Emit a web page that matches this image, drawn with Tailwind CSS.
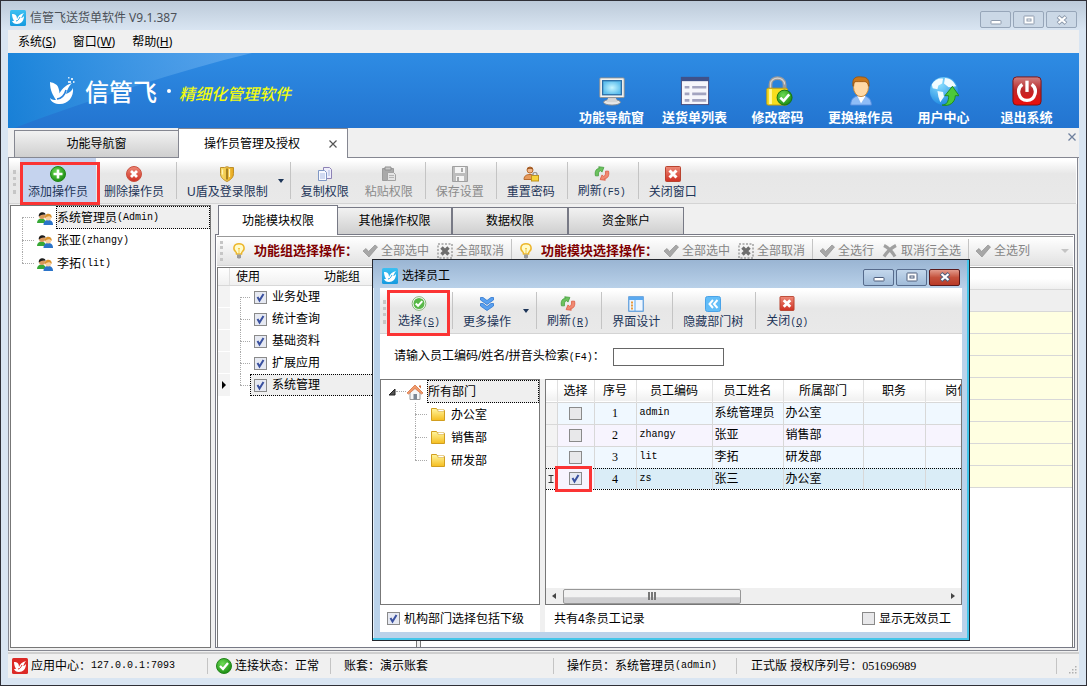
<!DOCTYPE html>
<html lang="zh-CN">
<head>
<meta charset="utf-8">
<title>信管飞送货单软件</title>
<script src="https://cdn.jsdelivr.net/npm/@tailwindcss/browser@4"></script>
</head>
<body class="font-['Liberation_Sans','Noto_Sans_CJK_SC',sans-serif] text-[12px] leading-4 text-black">
<svg class="absolute size-0" xmlns="http://www.w3.org/2000/svg">
  <defs>
    <linearGradient id="gBlue" x1="0" y1="0" x2="0" y2="1"><stop offset="0" stop-color="#3cc0f2"/><stop offset="1" stop-color="#159adf"/></linearGradient>
    <linearGradient id="gRed" x1="0" y1="0" x2="0" y2="1"><stop offset="0" stop-color="#ee8a78"/><stop offset="1" stop-color="#cf2f22"/></linearGradient>
    <linearGradient id="gPower" x1="0" y1="0" x2="0" y2="1"><stop offset="0" stop-color="#cf8080"/><stop offset=".45" stop-color="#bb2a2c"/><stop offset="1" stop-color="#ee0d0a"/></linearGradient>
    <linearGradient id="gGold" x1="0" y1="0" x2="1" y2="0"><stop offset="0" stop-color="#f9df6e"/><stop offset="1" stop-color="#e8a81c"/></linearGradient>
    <linearGradient id="gFolder" x1="0" y1="0" x2="0" y2="1"><stop offset="0" stop-color="#fff6a0"/><stop offset="1" stop-color="#f5bd1e"/></linearGradient>
    <radialGradient id="gGreen" cx=".4" cy=".35" r=".7"><stop offset="0" stop-color="#6ddc55"/><stop offset="1" stop-color="#17890f"/></radialGradient>
    <radialGradient id="gGlobe" cx=".35" cy=".25" r=".8"><stop offset="0" stop-color="#8be0ff"/><stop offset="1" stop-color="#1a86e0"/></radialGradient>
    <radialGradient id="gScreen"><stop offset="0" stop-color="#c8f6ff"/><stop offset="1" stop-color="#5fc0ee"/></radialGradient>
    <linearGradient id="gSwoosh" x1="0" y1="0" x2="1" y2="0"><stop offset="0" stop-color="#1583d8" stop-opacity=".75"/><stop offset="1" stop-color="#75b4f2" stop-opacity=".6"/></linearGradient>
  </defs>
  <symbol id="bird" viewBox="0 0 26 28"><path d="M1 5c4 1 8 2 9 8 1 3 0 5-1 6 3-6 7-11 14-13-4 4-5 8-6 11 3-1 6-3 7-6 1 9-5 16-13 16-5 0-9-2-10-6 2 2 4 2 6 2C4 18 1 14 1 5z" fill="currentColor"/><path d="M8 22c4 0 8-4 9-9" fill="none" stroke="#2b83dc" stroke-width="1.6"/><path d="M19 4h3v2h-3zM22 1h2v2h-2zM24 4h1.500v2h-1.500zM19 0h1.500v1.500h-1.500z" fill="currentColor" opacity=".8"/></symbol>
  <symbol id="app" viewBox="0 0 16 16"><rect width="16" height="16" rx="1.500" fill="url(#gBlue)"/><path d="M2 4c3 0 5 1 5 5 1-3 3-5 7-6-2 2-2 4-3 5 1 0 2-1 3-2 0 5-3 8-7 8-3 0-4-1-5-3h2C3 9 2 7 2 4z" fill="#fff"/><path d="M6 11c2 0 3-2 4-4" stroke="#27a6e6" fill="none"/></symbol>
  <symbol id="appred" viewBox="0 0 16 16"><rect width="16" height="16" rx="1.500" fill="#dc2a26"/><path d="M2 4c3 0 5 1 5 5 1-3 3-5 7-6-2 2-2 4-3 5 1 0 2-1 3-2 0 5-3 8-7 8-3 0-4-1-5-3h2C3 9 2 7 2 4z" fill="#fff"/><path d="M6 11c2 0 3-2 4-4" stroke="#dc2a26" fill="none"/></symbol>
  <symbol id="add" viewBox="0 0 16 16"><circle cx="8" cy="8" r="7.500" fill="url(#gGreen)" stroke="#23851b"/><path d="M8 3.500v9M3.500 8h9" stroke="#fff" stroke-width="2.600"/></symbol>
  <symbol id="del" viewBox="0 0 16 16"><circle cx="8" cy="8" r="7.500" fill="url(#gRed)" stroke="#c9503f"/><path d="M5 5l6 6M11 5l-6 6" stroke="#fff" stroke-width="2.800"/></symbol>
  <symbol id="ok" viewBox="0 0 16 16"><circle cx="8" cy="8" r="7.500" fill="url(#gGreen)" stroke="#23851b"/><path d="M4 8l3 3 5-6" stroke="#fff" stroke-width="2.300" fill="none"/></symbol>
  <symbol id="oklight" viewBox="0 0 16 16"><circle cx="8" cy="8" r="7.300" fill="#fff" stroke="#7fae73"/><circle cx="8" cy="8" r="5.900" fill="#58b848"/><path d="M4.500 8l2.500 2.500 4.500-5" stroke="#fff" stroke-width="2.200" fill="none"/></symbol>
  <symbol id="shield" viewBox="0 0 16 16"><path d="M1.500 1.500h4L8 .7l2.500.8h4v6c0 4-3 6.500-6.500 8-3.500-1.500-6.500-4-6.500-8z" fill="url(#gGold)" stroke="#bd8f2b"/><path d="M8 2.500v11" stroke="#8f6b14" stroke-width="1.500"/><path d="M3.500 3.500v5M10.500 3v8" stroke="#fff3b8" stroke-width="1.200"/></symbol>
  <symbol id="copy" viewBox="0 0 16 16"><path d="M6.500 1.500h6l2 2v9h-8z" fill="#efeefb" stroke="#8d82b5"/><path d="M1.500 4.500h6l2 2v8h-8z" fill="#f7f9ff" stroke="#7f97c4"/><path d="M3 8h5M3 10h5M3 12h5M11 5h2M11 7h2M11 9h2" stroke="#a9bbe3"/></symbol>
  <symbol id="paste" viewBox="0 0 16 16"><path d="M1.500 2.500h11v12h-11z" fill="#a9a9a9" stroke="#9b9b9b"/><path d="M4 1h6v3H4z" fill="#c9c9c9" stroke="#8f8f8f"/><path d="M6.500 6.500h6l2 2v6h-8z" fill="#e4e4e4" stroke="#a3a3a3"/><path d="M8 9.500h5M8 11.500h5" stroke="#b5b5b5"/></symbol>
  <symbol id="save" viewBox="0 0 16 16"><path d="M.5.5h15v15H.5z" fill="#bdbdbd" stroke="#a0a0a0"/><path d="M3 1h10v6H3zM4 10h8v5H4z" fill="#f5f5f5"/><path d="M9 2h2v4H9zM5 11h2v4H5z" fill="#aaa"/></symbol>
  <symbol id="reset" viewBox="0 0 16 16"><circle cx="7" cy="4" r="3" fill="#f3b98a" stroke="#b86a2c"/><path d="M4 3.500C4 .5 10 .5 10 3.500 8 2.500 6 2.500 4 3.500z" fill="#9a5420"/><path d="M1 13.500c0-4 3-5 6-5s4 1 4 5z" fill="#e79a5c" stroke="#b86a2c"/><rect x="8.500" y="9.500" width="7" height="5.500" fill="#f6d23b" stroke="#c0921a"/><path d="M10 9.500V8c0-2 4-2 4 0v1.500" fill="none" stroke="#8b8b8b" stroke-width="1.200"/></symbol>
  <symbol id="refresh" viewBox="0 0 16 16"><path d="M1 10.500C0 5.500 2 2.500 5 2.800L4.500.8l5.500.7L8 6.500 6.500 5C4.500 5.200 4 7.500 4.200 10.500z" fill="#6cc25e" stroke="#3f9a38" stroke-width=".8"/><path d="M15 5.500c1 5-1 8-4 7.700l.5 2-5.500-.7 2-5 1.500 1.500c2-.2 2.500-2.500 2.300-5.500z" fill="#f08a72" stroke="#dc5238" stroke-width=".8"/></symbol>
  <symbol id="closered" viewBox="0 0 16 16"><rect x=".5" y=".5" width="15" height="15" rx="1" fill="url(#gRed)" stroke="#b9432f"/><path d="M4.500 4.500l7 7M11.500 4.500l-7 7" stroke="#fff" stroke-width="3"/></symbol>
  <symbol id="more" viewBox="0 0 16 16"><path d="M1.500 1.500h2.500L8 4.500l4-3h2.500V4L8 8.500 1.500 4zM1.500 7.500H4l4 3 4-3h2.500V10L8 14.500 1.500 10z" fill="#58a0f0" stroke="#2f76cf" stroke-width=".8"/></symbol>
  <symbol id="design" viewBox="0 0 16 16"><rect x=".8" y=".8" width="14.400" height="14.400" fill="#eef6ff" stroke="#3b8ad8"/><path d="M1 1h14v3H1z" fill="#5aa9f0"/><path d="M7 4v11" stroke="#5aa9f0"/><path d="M3 6.500h2M3 9.500h2M3 12.500h2" stroke="#e89a3c" stroke-width="1.800"/></symbol>
  <symbol id="hide" viewBox="0 0 16 16"><rect x=".5" y=".5" width="15" height="15" rx="2" fill="#62bdf8" stroke="#4aa3e8"/><path d="M8 4L4.500 8 8 12M12.500 4L9 8l3.500 4" fill="none" stroke="#fff" stroke-width="2"/></symbol>
  <symbol id="bulb" viewBox="0 0 16 16"><path d="M8 .8c6 0 6 5.500 3.500 7.700-.8.700-1 1.500-1 2.500h-5c0-1-.2-1.800-1-2.500C2 6.300 2 .8 8 .8z" fill="#fffbc9" stroke="#ecb62c" stroke-width="1.500"/><path d="M6 11.500h4v3l-1 1H7l-1-1z" fill="#9b9b9b"/><path d="M7 5l1 1 1-1M8 6v5" stroke="#f3c84a" fill="none"/></symbol>
  <symbol id="tick" viewBox="0 0 16 16"><path d="M1 8l3-2.500 2.500 3L13 2l2.500 2L7 14z" fill="#a7a7a7" stroke="#909090" stroke-width=".7"/></symbol>
  <symbol id="untick" viewBox="0 0 16 16"><rect x="1" y="1" width="14" height="14" fill="none" stroke="#777" stroke-dasharray="2 1.500"/><path d="M4.500 4.500l7 7M11.500 4.500l-7 7" stroke="#6e6e6e" stroke-width="3.500"/></symbol>
  <symbol id="cross" viewBox="0 0 16 16"><path d="M2 2.500c4 2 8 6 11 11M14 2.500C9 5 5 9 2 13.500" stroke="#a0a0a0" stroke-width="3.200" fill="none"/></symbol>
  <symbol id="users" viewBox="0 0 16 16"><path d="M0 13c0-3 2-4.500 4.500-4.500S9 10 9 13z" fill="#37a836"/><circle cx="5" cy="6" r="3" fill="#d9985d"/><path d="M1.800 6.500C1 1 9 1 8.500 5 6 4 4 5 1.800 6.500z" fill="#1c1c1c"/><path d="M6.500 15c0-3.500 2-5 4.700-5 3 0 4.800 1.500 4.800 5z" fill="#2b74c9"/><circle cx="11.200" cy="7.500" r="3" fill="#f7cf9e"/><path d="M7.800 8.500C6.500 2.500 15.500 2 14.800 8c-2-2.500-4.500-2.500-7 .5z" fill="#d9922d"/></symbol>
  <symbol id="folder" viewBox="0 0 16 16"><path d="M1.500 2.500h5l1.500 2h6.500v10h-13z" fill="url(#gFolder)" stroke="#d19e1f"/><path d="M8 3.500h6v2H8z" fill="#fff" stroke="#d9b04a" stroke-width=".6"/></symbol>
  <symbol id="home" viewBox="0 0 16 16"><path d="M3 8l5-5 5 5v7.500H3z" fill="#f6f6f6" stroke="#9a9a9a"/><path d="M0 9l8-8 8 8-1.500 1L8 4.500 1.500 10z" fill="#f29a6b" stroke="#cf6a38" stroke-width=".7"/><path d="M6.500 10h3.500v5.500H6.500z" fill="#7b8794"/><path d="M12 1.500h2v3l-2-2z" fill="#cf6a38"/></symbol>
  <symbol id="check" viewBox="0 0 13 13"><path d="M3.500 6l2 3.500L9.500 3" fill="none" stroke="#39509f" stroke-width="2"/></symbol>
  <symbol id="wmin" viewBox="0 0 12 10"><rect x="1" y="5.500" width="10" height="3.500" rx=".5" fill="#fff" stroke="currentColor"/></symbol>
  <symbol id="wmax" viewBox="0 0 12 10"><rect x="1" y="1" width="10" height="8" rx=".5" fill="#fff" stroke="currentColor"/><rect x="4" y="4" width="4" height="2" fill="none" stroke="currentColor"/></symbol>
  <symbol id="wx" viewBox="0 0 12 10"><path d="M2 1.500l8 7M10 1.500l-8 7" stroke="currentColor" stroke-width="4"/><path d="M2.500 2l7 6M9.500 2l-7 6" stroke="#fff" stroke-width="2.200"/></symbol>
  <symbol id="pc" viewBox="0 0 32 32"><ellipse cx="16" cy="28" rx="9" ry="3" fill="#e8e8e8" stroke="#8d8d8d"/><path d="M12 23h8l2 5H10z" fill="#d5d5d5"/><rect x="3" y="2" width="26" height="21" rx="1" fill="#f3f3f0" stroke="#8f9090"/><rect x="6" y="5" width="20" height="15" fill="url(#gScreen)" stroke="#2a6ea6" stroke-width="1.400"/></symbol>
  <symbol id="list" viewBox="0 0 32 32"><rect x="1.500" y="1.500" width="29" height="29" fill="#f6f6fb" stroke="#4a4a78"/><path d="M1 1h30v4.500H1z" fill="#3f5189"/><path d="M5 12h5M5 19h5M5 26h5M13 12h15M13 19h15M13 26h15" stroke="#a3a4c0" stroke-width="2.800"/></symbol>
  <symbol id="lock" viewBox="0 0 32 32"><path d="M8 14V9c0-9 15-9 15 0v5" fill="none" stroke="#9b9b9b" stroke-width="4"/><path d="M8 14V9c0-9 15-9 15 0" fill="none" stroke="#d5d5d5" stroke-width="1.200"/><rect x="4" y="13" width="22" height="18" rx="1.500" fill="#f7dd1e" stroke="#c09a10"/><path d="M8 14v16" stroke="#fff8a0" stroke-width="3"/><circle cx="23" cy="23" r="8" fill="url(#gGreen)" stroke="#14700f"/><path d="M18.500 23l3.500 3.500 6-7" fill="none" stroke="#fff" stroke-width="2.800"/></symbol>
  <symbol id="user" viewBox="0 0 32 32"><path d="M5 31c0-7 4-10 11-10s11 3 11 10z" fill="#8fbdf7" stroke="#5a8fe0"/><path d="M12 21l4 8 5-8z" fill="#fff"/><ellipse cx="16" cy="12" rx="8" ry="10" fill="#ffd9a6" stroke="#c98a3c"/><path d="M7.500 11C6 1 11 .5 17 1c7 0 8 5 7.500 10-1-3-2-4-4-5 1-.0-9 0-11 0-1 1-1.500 2-2 5z" fill="#c9761a" stroke="#94500c" stroke-width=".8"/></symbol>
  <symbol id="globe" viewBox="0 0 32 32"><circle cx="16" cy="16" r="15" fill="url(#gGlobe)"/><path d="M3 9c3-5 8-7 12-6l-1 5-4 2-1 4-5-1zM17 2c6 0 10 4 12 9l-8 1-5-4zM9 16l6 1 1 5-4 6-2-6z" fill="#f0fbff"/><path d="M14 31c5 0 7-4 7-10h-4l8-10 7 10h-4c0 7-6 12-14 10z" fill="#4cc93a" stroke="#1f8a1a"/></symbol>
  <symbol id="power" viewBox="0 0 32 32"><rect x="1" y="1" width="30" height="30" rx="4" fill="url(#gPower)" stroke="#7d1010"/><path d="M11 9c-7 5-4 17 5 17s12-12 5-17" fill="none" stroke="#fff" stroke-width="3.500"/><path d="M16 5v12" stroke="#fff" stroke-width="3.500"/></symbol>
</svg>

<div class="relative flex min-h-screen flex-col border border-[#2f2f36] bg-[#d9e5f2]">
  <!-- Title bar -->
  <header class="flex h-[29px] items-center gap-1 bg-linear-to-b from-[#bccad9] to-[#d9e5f2] pr-[9px] pl-[9px]">
    <svg class="mt-1 size-4"><use href="#app"/></svg>
    <h1 class="mt-1 flex-1 font-['Noto_Sans','Noto_Sans_CJK_SC',sans-serif] text-[12px] text-[#4c5158]">信管飞送货单软件 V9.1.387</h1>
    <div class="mt-2 flex gap-0.5 text-[#8e9bad]">
      <button aria-label="最小化" class="flex h-[17px] w-[31px] items-center justify-center rounded-xs border border-[#97a6b9] bg-[#cbd8e6]"><svg class="h-2.5 w-3"><use href="#wmin"/></svg></button>
      <button aria-label="最大化" class="flex h-[17px] w-[31px] items-center justify-center rounded-xs border border-[#97a6b9] bg-[#cbd8e6]"><svg class="h-2.5 w-3"><use href="#wmax"/></svg></button>
      <button aria-label="关闭" class="flex h-[17px] w-[31px] items-center justify-center rounded-xs border border-[#97a6b9] bg-[#cbd8e6]"><svg class="h-2.5 w-3"><use href="#wx"/></svg></button>
    </div>
  </header>

  <div class="mr-[7px] ml-[7px] flex flex-1 flex-col bg-[#f0f0f0]">
    <nav class="flex h-[23px] items-center gap-[17px] pl-2.5 font-['Noto_Sans','Noto_Sans_CJK_SC',sans-serif]">
      <button>系统(<u>S</u>)</button><button>窗口(<u>W</u>)</button><button>帮助(<u>H</u>)</button>
    </nav>

    <!-- Banner -->
    <div class="relative flex h-[75px] items-center overflow-hidden bg-linear-to-b from-[#2e8ce4] to-[#2374d0] pr-[11px]">
      <svg class="absolute top-0 left-0 h-[75px] w-[260px]" viewBox="0 0 260 75"><path d="M0 0H244C170 18 90 44 6 75H0z" fill="url(#gSwoosh)"/></svg>
      <div class="relative flex flex-1 items-center pl-[41px] text-white">
        <svg class="h-7 w-[26px]"><use href="#bird"/></svg>
        <span class="ml-2.5 font-['Noto_Sans_CJK_SC',sans-serif] text-[24px] leading-7 font-medium">信管飞</span>
        <span class="ml-2.5 size-1 rounded-full bg-white"></span>
        <span class="ml-2 pt-1 font-['Noto_Sans_CJK_SC',sans-serif] text-[16px] leading-6 font-medium text-[#f0fa10] italic">精细化管理软件</span>
      </div>
      <div class="relative flex pt-[22px] text-[13px] leading-5 font-bold text-white">
        <button class="flex w-[83px] flex-col items-center gap-0.5"><svg class="size-[30px]"><use href="#pc"/></svg>功能导航窗</button>
        <button class="flex w-[83px] flex-col items-center gap-0.5"><svg class="size-[30px]"><use href="#list"/></svg>送货单列表</button>
        <button class="flex w-[83px] flex-col items-center gap-0.5"><svg class="size-[30px]"><use href="#lock"/></svg>修改密码</button>
        <button class="flex w-[83px] flex-col items-center gap-0.5"><svg class="size-[30px]"><use href="#user"/></svg>更换操作员</button>
        <button class="flex w-[83px] flex-col items-center gap-0.5"><svg class="size-[30px]"><use href="#globe"/></svg>用户中心</button>
        <button class="flex w-[83px] flex-col items-center gap-0.5"><svg class="size-[30px]"><use href="#power"/></svg>退出系统</button>
      </div>
    </div>

    <!-- Page tabs -->
    <div class="flex h-[30px] shrink-0 items-stretch">
      <div class="w-1.5 border-b border-[#858791]"></div>
      <button class="mt-0.5 w-[164px] border border-r-0 border-[#858791] bg-linear-to-b from-[#f2f2f2] to-[#cfcfcf]">功能导航窗</button>
      <div class="flex w-[170px] items-center border border-b-0 border-[#858791] bg-white pr-2.5 pl-[25px]"><button class="flex-1 text-left">操作员管理及授权</button><button aria-label="关闭标签" class="size-2"><svg class="size-2" viewBox="0 0 8 8"><path d="M.5.5l7 7M7.500.5l-7 7" stroke="#555" stroke-width="1.200"/></svg></button></div>
      <div class="flex flex-1 items-start justify-end border-b border-[#858791] pt-1 pr-0.5"><button aria-label="关闭页面" class="size-2.5 p-px"><svg class="size-2" viewBox="0 0 8 8"><path d="M.5.5l7 7M7.500.5l-7 7" stroke="#6e7f9d" stroke-width="1.300"/></svg></button></div>
    </div>

    <!-- Page -->
    <main class="mr-px flex flex-1 flex-col border border-t-0 border-[#858791] bg-white">
      <div class="mr-px flex h-[46px] border-b border-[#d4d4d4] bg-linear-to-b from-white from-5% via-[#e7e7e7] via-35% to-[#e9e9e9] text-[#1d3558]">
        <span class="mt-3 ml-1 h-6 border-l-[3px] border-dotted border-[#c6c6c6]"></span>
        <button class="relative ml-1 flex w-[76px] flex-col items-center bg-[#c5d3ee] pt-2 leading-5"><svg class="size-4"><use href="#add"/></svg>添加操作员<span class="absolute -right-1 top-1 -bottom-0.5 left-0 border-3 border-[#fb3434]"></span></button>
        <button class="flex flex-col items-center px-2 pt-2 leading-5"><svg class="size-4"><use href="#del"/></svg>删除操作员</button>
        <span class="mt-1 mr-0.5 mb-1 ml-1 w-px bg-[#c4c4c4]"></span>
        <button class="flex flex-col items-center px-2 pt-2 leading-5"><svg class="size-4"><use href="#shield"/></svg><span>U盾及登录限制</span></button>
        <button aria-label="更多登录限制" class="w-2.5"><svg class="mx-auto h-1 w-1.5" viewBox="0 0 6 4"><path d="M0 0h6L3 4z" fill="#1d3558"/></svg></button>
        <span class="mt-1 mr-0.5 mb-1 ml-1 w-px bg-[#c4c4c4]"></span>
        <button class="flex flex-col items-center px-2 pt-2 leading-5"><svg class="size-4"><use href="#copy"/></svg>复制权限</button>
        <button disabled class="flex flex-col items-center px-2 pt-2 leading-5 text-[#8b8b8b]"><svg class="size-4"><use href="#paste"/></svg>粘贴权限</button>
        <span class="mt-1 mr-0.5 mb-1 ml-1 w-px bg-[#c4c4c4]"></span>
        <button disabled class="flex flex-col items-center px-2 pt-2 leading-5 text-[#8b8b8b]"><svg class="size-4"><use href="#save"/></svg>保存设置</button>
        <span class="mt-1 mr-0.5 mb-1 ml-1 w-px bg-[#c4c4c4]"></span>
        <button class="flex flex-col items-center px-2 pt-2 leading-5"><svg class="size-4"><use href="#reset"/></svg>重置密码</button>
        <span class="mt-1 mr-0.5 mb-1 ml-1 w-px bg-[#c4c4c4]"></span>
        <button class="flex flex-col items-center px-2 pt-2 leading-5"><svg class="size-4"><use href="#refresh"/></svg><span>刷新<span class="font-['Liberation_Mono',monospace] text-[10px]">(F5)</span></span></button>
        <span class="mt-1 mr-0.5 mb-1 ml-1 w-px bg-[#c4c4c4]"></span>
        <button class="flex flex-col items-center px-2 pt-2 leading-5"><svg class="size-4"><use href="#closered"/></svg>关闭窗口</button>
      </div>

      <div class="flex flex-1 bg-[#f0f0f0] pr-0.5 pt-px pl-px">
        <!-- Operators -->
        <aside class="mb-0.5 w-[201px] border border-[#777] bg-white">
          <ul class="pl-[11px]">
            <li class="flex h-[23px]"><span class="flex w-3 flex-col"><i class="flex-1"></i><i class="flex-1 border-t border-l border-dotted border-[#aaa]"></i></span><svg class="mt-1 ml-[3px] size-4"><use href="#users"/></svg><a href="#" class="ml-[3px] flex flex-1 items-center border border-dotted border-black bg-[#efefef]">系统管理员<span class="font-['Liberation_Mono',monospace] text-[10px]">(Admin)</span></a></li>
            <li class="flex h-[23px]"><span class="flex w-3 flex-col"><i class="flex-1 border-l border-dotted border-[#aaa]"></i><i class="flex-1 border-t border-l border-dotted border-[#aaa]"></i></span><svg class="mt-1 ml-[3px] size-4"><use href="#users"/></svg><a href="#" class="ml-1 flex items-center">张亚<span class="font-['Liberation_Mono',monospace] text-[10px]">(zhangy)</span></a></li>
            <li class="flex h-[23px]"><span class="flex w-3 flex-col"><i class="flex-1 border-l border-dotted border-[#aaa]"></i><i class="flex-1 border-t border-dotted border-[#aaa]"></i></span><svg class="mt-1 ml-[3px] size-4"><use href="#users"/></svg><a href="#" class="ml-1 flex items-center">李拓<span class="font-['Liberation_Mono',monospace] text-[10px]">(lit)</span></a></li>
          </ul>
        </aside>

        <!-- Permissions -->
        <section class="mb-0.5 ml-1 flex min-w-0 flex-1 flex-col">
          <div class="flex h-[30px]">
            <div class="w-[3px] border-b border-[#777985]"></div>
            <button class="w-[120px] border border-b-0 border-[#777985] bg-white">功能模块权限</button>
            <button class="mt-0.5 w-[114px] border border-l-0 border-[#777985] bg-linear-to-b from-[#f2f2f2] to-[#cfcfcf]">其他操作权限</button>
            <button class="mt-0.5 w-[116px] border border-[#777985] bg-linear-to-b from-[#f2f2f2] to-[#cfcfcf]">数据权限</button>
            <button class="mt-0.5 w-[116px] border border-[#777985] bg-linear-to-b from-[#f2f2f2] to-[#cfcfcf]">资金账户</button>
            <div class="flex-1 border-b border-[#777985]"></div>
          </div>
          <div class="flex flex-1 flex-col border border-t-0 border-[#777985] bg-white px-px pt-px">
            <div class="flex h-[30px] items-center overflow-hidden border-t border-b border-[#999] border-b-[#d4d4d4] bg-linear-to-b from-white to-[#e2e2e2] whitespace-nowrap text-[#858585]">
              <span class="ml-[3px] h-5 border-l-[3px] border-dotted border-[#c6c6c6]"></span>
              <svg class="ml-2 size-4"><use href="#bulb"/></svg><b class="ml-[7px] w-[108px] text-[13px] text-[#800000]">功能组选择操作：</b>
              <button disabled class="flex items-center gap-[3px]"><svg class="size-4"><use href="#tick"/></svg>全部选中</button>
              <button disabled class="ml-2 flex items-center gap-[3px]"><svg class="size-4"><use href="#untick"/></svg>全部取消</button>
              <span class="ml-[7px] h-6 w-px bg-[#c4c4c4]"></span>
              <svg class="ml-1.5 size-4"><use href="#bulb"/></svg><b class="ml-[7px] w-[122px] text-[13px] text-[#800000]">功能模块选择操作：</b>
              <button disabled class="flex items-center gap-[3px]"><svg class="size-4"><use href="#tick"/></svg>全部选中</button>
              <button disabled class="ml-2 flex items-center gap-[3px]"><svg class="size-4"><use href="#untick"/></svg>全部取消</button>
              <span class="ml-[7px] h-6 w-px bg-[#c4c4c4]"></span>
              <button disabled class="ml-1.5 flex items-center gap-[3px]"><svg class="size-4"><use href="#tick"/></svg>全选行</button>
              <button disabled class="ml-2 flex items-center gap-[3px]"><svg class="size-4"><use href="#cross"/></svg>取消行全选</button>
              <span class="ml-[7px] h-6 w-px bg-[#c4c4c4]"></span>
              <button disabled class="ml-1.5 flex items-center gap-[3px]"><svg class="size-4"><use href="#tick"/></svg>全选列</button>
              <svg class="mr-1 ml-auto h-1 w-2" viewBox="0 0 8 4"><path d="M0 0h8L4 4z" fill="#c4c4c4"/></svg>
            </div>
            <div class="mt-px flex flex-1">
              <div class="w-[200px] border border-b-0 border-[#777]">
                <div class="flex h-[18px] items-center border-b border-[#d8d8d8] bg-linear-to-b from-white to-[#f0f0f0]"><span class="h-full w-3 border-r border-[#e0e0e0]"></span><span class="w-9 text-center">使用</span><span class="ml-[58px]">功能组</span></div>
                <ul>
                  <li class="flex h-[22px]"><span class="w-3 border-b border-white bg-[#f3f3f3]"></span><span class="ml-2.5 flex w-2.5 flex-col"><i class="flex-1"></i><i class="flex-1 border-t border-l border-dotted border-[#aaa]"></i></span><label class="ml-1 flex items-center gap-[5px]"><span class="grid size-[13px]"><input type="checkbox" checked class="col-start-1 row-start-1 size-[13px] appearance-none border border-[#8a8a8a] bg-[#e6e9f2]"><svg class="col-start-1 row-start-1 size-[13px]"><use href="#check"/></svg></span>业务处理</label></li>
                  <li class="flex h-[22px]"><span class="w-3 border-b border-white bg-[#f3f3f3]"></span><span class="ml-2.5 flex w-2.5 flex-col"><i class="flex-1 border-l border-dotted border-[#aaa]"></i><i class="flex-1 border-t border-l border-dotted border-[#aaa]"></i></span><label class="ml-1 flex items-center gap-[5px]"><span class="grid size-[13px]"><input type="checkbox" checked class="col-start-1 row-start-1 size-[13px] appearance-none border border-[#8a8a8a] bg-[#e6e9f2]"><svg class="col-start-1 row-start-1 size-[13px]"><use href="#check"/></svg></span>统计查询</label></li>
                  <li class="flex h-[22px]"><span class="w-3 border-b border-white bg-[#f3f3f3]"></span><span class="ml-2.5 flex w-2.5 flex-col"><i class="flex-1 border-l border-dotted border-[#aaa]"></i><i class="flex-1 border-t border-l border-dotted border-[#aaa]"></i></span><label class="ml-1 flex items-center gap-[5px]"><span class="grid size-[13px]"><input type="checkbox" checked class="col-start-1 row-start-1 size-[13px] appearance-none border border-[#8a8a8a] bg-[#e6e9f2]"><svg class="col-start-1 row-start-1 size-[13px]"><use href="#check"/></svg></span>基础资料</label></li>
                  <li class="flex h-[22px]"><span class="w-3 border-b border-white bg-[#f3f3f3]"></span><span class="ml-2.5 flex w-2.5 flex-col"><i class="flex-1 border-l border-dotted border-[#aaa]"></i><i class="flex-1 border-t border-l border-dotted border-[#aaa]"></i></span><label class="ml-1 flex items-center gap-[5px]"><span class="grid size-[13px]"><input type="checkbox" checked class="col-start-1 row-start-1 size-[13px] appearance-none border border-[#8a8a8a] bg-[#e6e9f2]"><svg class="col-start-1 row-start-1 size-[13px]"><use href="#check"/></svg></span>扩展应用</label></li>
                  <li class="flex h-[22px]"><span class="flex w-3 items-center bg-[#f3f3f3] pl-1"><svg class="h-2 w-1" viewBox="0 0 4 8"><path d="M0 0l4 4-4 4z"/></svg></span><span class="ml-2.5 flex w-2.5 flex-col"><i class="flex-1 border-l border-dotted border-[#aaa]"></i><i class="flex-1 border-t border-dotted border-[#aaa]"></i></span><label class="flex flex-1 items-center gap-[5px] border border-dotted border-black bg-[#efefef] pl-[3px]"><span class="grid size-[13px]"><input type="checkbox" checked class="col-start-1 row-start-1 size-[13px] appearance-none border border-[#8a8a8a] bg-[#e6e9f2]"><svg class="col-start-1 row-start-1 size-[13px]"><use href="#check"/></svg></span>系统管理</label></li>
                </ul>
              </div>
              <div class="w-[3px] bg-[#f0f0f0]"></div>
              <div class="flex-1 border border-b-0 border-[#777]">
                <div class="h-[22px] border-b border-[#d8d8d8] bg-linear-to-b from-white from-50% to-[#f0f0f0]"></div>
                <div class="h-[22px] border-b border-[#d8d8d8] bg-[#efefef]"></div>
                <div class="h-[22px] border-b border-[#d8d8d8] bg-[#ffffe1]"></div>
                <div class="h-[22px] border-b border-[#d8d8d8] bg-[#ffffe1]"></div>
                <div class="h-[22px] border-b border-[#d8d8d8] bg-[#ffffe1]"></div>
                <div class="h-[22px] border-b border-[#d8d8d8] bg-[#ffffe1]"></div>
                <div class="h-[22px] border-b border-[#d8d8d8] bg-[#ffffe1]"></div>
                <div class="h-[22px] border-b border-[#d8d8d8] bg-[#ffffe1]"></div>
                <div class="h-[22px] border-b border-[#d8d8d8] bg-[#ffffe1]"></div>
                <div class="h-[22px] border-b border-[#d8d8d8] bg-[#ffffe1]"></div>
              </div>
            </div>
          </div>
        </section>
      </div>
    </main>

    <!-- Status bar -->
    <footer class="mt-px flex h-[26px] items-center border-t-2 border-[#cfcfcf] bg-[#f0f0f0] pl-1 whitespace-nowrap">
      <div class="flex w-[195px] items-center gap-[3px]"><svg class="size-4"><use href="#appred"/></svg><span class="flex items-center">应用中心：<span class="font-['Liberation_Mono',monospace] text-[10px]">127.0.0.1:7093</span></span></div>
      <div class="flex w-[123px] items-center gap-[3px] border-l border-[#c4c4c4] pl-2"><svg class="size-4"><use href="#ok"/></svg>连接状态：正常</div>
      <div class="w-[223px] border-l border-[#c4c4c4] pl-[13px]">账套：演示账套</div>
      <div class="flex w-[183px] items-center border-l border-[#c4c4c4] pl-[13px]">操作员：系统管理员<span class="font-['Liberation_Mono',monospace] text-[10px]">(admin)</span></div>
      <div class="flex-1 border-l border-[#c4c4c4] pl-[14px]">正式版 授权序列号：<span class="font-['Liberation_Serif',serif]">051696989</span></div>
      <div class="flex h-4 w-[23px] items-end justify-end border-l border-[#c4c4c4] pr-0.5"><svg class="size-2" viewBox="0 0 8 8"><path d="M6 0h1.500v1.500H6zM6 3h1.500v1.500H6zM6 6h1.500v1.500H6zM3 3h1.500v1.500H3zM3 6h1.500v1.500H3zM0 6h1.500v1.500H0z" fill="#b0b0b0"/></svg></div>
    </footer>
  </div>
  <div class="h-[7px]"></div>

  <!-- Employee picker -->
  <div role="dialog" aria-labelledby="dlgTitle" class="absolute top-[258px] left-[371px] flex h-[382px] w-[598px] flex-col border border-[#24272e] bg-[#bad2ea] shadow-[inset_-2px_-2px_0_#43c6ea,inset_1px_1px_0_#e8f2fb]">
    <div class="mr-0.5 flex h-7 items-center gap-1 bg-linear-to-b from-[#9ab5d3] to-[#b9d1e9] pr-[7px] pl-[9px]">
      <svg class="mt-1 size-4"><use href="#app"/></svg>
      <h2 id="dlgTitle" class="mt-1 flex-1">选择员工</h2>
      <div class="mt-1.5 flex gap-0.5 text-[#4f5f7d]">
        <button aria-label="最小化" class="flex h-[17px] w-[31px] items-center justify-center rounded-xs border border-[#566b8c] bg-linear-to-b from-[#c3d7ec] to-[#a0bbd8]"><svg class="h-2.5 w-3"><use href="#wmin"/></svg></button>
        <button aria-label="最大化" class="flex h-[17px] w-[31px] items-center justify-center rounded-xs border border-[#566b8c] bg-linear-to-b from-[#c3d7ec] to-[#a0bbd8]"><svg class="h-2.5 w-3"><use href="#wmax"/></svg></button>
        <button aria-label="关闭" class="flex h-[17px] w-[31px] items-center justify-center rounded-xs border border-[#5a1a1c] bg-linear-to-b from-[#e29a8c] via-[#c4513c] to-[#b93a28]"><svg class="h-2.5 w-3"><use href="#wx"/></svg></button>
      </div>
    </div>
    <div class="mx-[7px] mb-2 flex flex-1 flex-col bg-white">
      <div class="flex h-[46px] border-b border-[#d4d4d4] bg-linear-to-b from-white from-5% via-[#e7e7e7] via-45% to-[#e9e9e9] text-[#1d3558]">
        <span class="mt-3 ml-[3px] h-6 border-l-[3px] border-dotted border-[#c6c6c6]"></span>
        <button class="relative ml-1 flex flex-col items-center px-2 pt-2 leading-5"><svg class="size-4"><use href="#oklight"/></svg><span>选择<span class="font-['Liberation_Mono',monospace] text-[10px]">(<u>S</u>)</span></span><span class="absolute top-0.5 -right-0.5 -bottom-[3px] -left-[3px] border-3 border-[#fb3434]"></span></button>
        <span class="mt-1 mr-0.5 mb-1 ml-1 w-px bg-[#c4c4c4]"></span>
        <button class="flex flex-col items-center px-2 pt-2 leading-5"><svg class="size-4"><use href="#more"/></svg>更多操作</button>
        <button aria-label="展开更多操作" class="w-[13px]"><svg class="mx-auto h-1 w-1.5" viewBox="0 0 6 4"><path d="M0 0h6L3 4z" fill="#1d3558"/></svg></button>
        <span class="mt-1 mr-0.5 mb-1 ml-1 w-px bg-[#c4c4c4]"></span>
        <button class="flex flex-col items-center px-2 pt-2 leading-5"><svg class="size-4"><use href="#refresh"/></svg><span>刷新<span class="font-['Liberation_Mono',monospace] text-[10px]">(<u>R</u>)</span></span></button>
        <span class="mt-1 mr-0.5 mb-1 ml-1 w-px bg-[#c4c4c4]"></span>
        <button class="flex flex-col items-center px-2 pt-2 leading-5"><svg class="size-4"><use href="#design"/></svg>界面设计</button>
        <span class="mt-1 mr-0.5 mb-1 ml-1 w-px bg-[#c4c4c4]"></span>
        <button class="flex flex-col items-center px-2 pt-2 leading-5"><svg class="size-4"><use href="#hide"/></svg>隐藏部门树</button>
        <span class="mt-1 mr-0.5 mb-1 ml-1 w-px bg-[#c4c4c4]"></span>
        <button class="flex flex-col items-center px-2 pt-2 leading-5"><svg class="size-4"><use href="#closered"/></svg><span>关闭<span class="font-['Liberation_Mono',monospace] text-[10px]">(<u>Q</u>)</span></span></button>
      </div>
      <div class="flex h-[45px] items-center pl-3.5">
        <label for="search" class="w-[219px]">请输入员工编码/姓名/拼音头检索<span class="font-['Liberation_Mono',monospace] text-[10px]">(F4)</span>：</label>
        <input id="search" type="text" class="h-[18px] w-[111px] border border-[#666] bg-white px-1">
      </div>
      <div class="flex flex-1">
        <div class="flex w-40 flex-col">
          <ul class="flex-1 border border-[#777]">
            <li class="flex h-[23px] items-center"><svg class="ml-[7px] size-2" viewBox="0 0 8 8"><path d="M7 1v6H1z" fill="#555" stroke="#222"/></svg><span class="w-2.5 border-t border-dotted border-[#aaa]"></span><svg class="ml-px size-4"><use href="#home"/></svg><a href="#" class="ml-1 flex flex-1 items-center self-stretch border border-dotted border-black bg-[#efefef]">所有部门</a></li>
            <li class="flex h-[23px] pl-[34px]"><span class="flex w-3 flex-col"><i class="flex-1 border-l border-dotted border-[#aaa]"></i><i class="flex-1 border-t border-l border-dotted border-[#aaa]"></i></span><svg class="mt-[3px] ml-[3px] size-4"><use href="#folder"/></svg><a href="#" class="ml-[5px] flex items-center">办公室</a></li>
            <li class="flex h-[23px] pl-[34px]"><span class="flex w-3 flex-col"><i class="flex-1 border-l border-dotted border-[#aaa]"></i><i class="flex-1 border-t border-l border-dotted border-[#aaa]"></i></span><svg class="mt-[3px] ml-[3px] size-4"><use href="#folder"/></svg><a href="#" class="ml-[5px] flex items-center">销售部</a></li>
            <li class="flex h-[23px] pl-[34px]"><span class="flex w-3 flex-col"><i class="flex-1 border-l border-dotted border-[#aaa]"></i><i class="flex-1 border-t border-dotted border-[#aaa]"></i></span><svg class="mt-[3px] ml-[3px] size-4"><use href="#folder"/></svg><a href="#" class="ml-[5px] flex items-center">研发部</a></li>
          </ul>
          <label class="flex h-[27px] items-center gap-1 pl-[7px]"><span class="grid size-[13px]"><input type="checkbox" checked class="col-start-1 row-start-1 size-[13px] appearance-none border border-[#8a8a8a] bg-[#e6e9f2]"><svg class="col-start-1 row-start-1 size-[13px]"><use href="#check"/></svg></span>机构部门选择包括下级</label>
        </div>
        <div class="w-[5px] bg-[#f0f0f0]"></div>
        <div class="flex min-w-0 flex-1 flex-col">
          <div class="flex flex-1 flex-col overflow-hidden border border-[#777]">
            <table class="w-[443px] table-fixed border-collapse">
              <colgroup><col class="w-[11px]"><col class="w-[37px]"><col class="w-[42px]"><col class="w-[76px]"><col class="w-[71px]"><col class="w-20"><col class="w-[62px]"><col class="w-16"></colgroup>
              <thead><tr class="h-[22px] border-b border-[#d8d8d8] bg-linear-to-b from-white from-40% to-[#f0f0f0]">
                <th class="border-r border-[#e0e0e0]"></th><th class="border-r border-[#e0e0e0] p-0 font-normal">选择</th><th class="border-r border-[#e0e0e0] p-0 font-normal">序号</th><th class="border-r border-[#e0e0e0] p-0 font-normal">员工编码</th><th class="border-r border-[#e0e0e0] p-0 font-normal">员工姓名</th><th class="border-r border-[#e0e0e0] p-0 font-normal">所属部门</th><th class="border-r border-[#e0e0e0] p-0 font-normal">职务</th><th class="p-0 font-normal">岗位</th></tr></thead>
              <tbody>
                <tr class="h-[22px] border-b border-[#d8d8d8] bg-[#f0f8ff]"><td class="border-r border-[#d8d8d8] bg-[#f3f3f3]"></td><td class="border-r border-[#d8d8d8] p-0"><input type="checkbox" aria-label="选择 admin" class="mx-auto block size-[13px] appearance-none border border-[#8a8a8a] bg-[#e8e8ea]"></td><td class="border-r border-[#d8d8d8] p-0 text-center font-['Liberation_Serif',serif]">1</td><td class="border-r border-[#d8d8d8] p-0 pl-[3px] font-['Liberation_Mono',monospace] text-[10px]">admin</td><td class="border-r border-[#d8d8d8] p-0 pl-0.5 whitespace-nowrap">系统管理员</td><td class="border-r border-[#d8d8d8] p-0 pl-0.5">办公室</td><td class="border-r border-[#d8d8d8]"></td><td></td></tr>
                <tr class="h-[22px] border-b border-[#d8d8d8] bg-[#f7f4fe]"><td class="border-r border-[#d8d8d8] bg-[#f3f3f3]"></td><td class="border-r border-[#d8d8d8] p-0"><input type="checkbox" aria-label="选择 zhangy" class="mx-auto block size-[13px] appearance-none border border-[#8a8a8a] bg-[#e8e8ea]"></td><td class="border-r border-[#d8d8d8] p-0 text-center font-['Liberation_Serif',serif]">2</td><td class="border-r border-[#d8d8d8] p-0 pl-[3px] font-['Liberation_Mono',monospace] text-[10px]">zhangy</td><td class="border-r border-[#d8d8d8] p-0 pl-0.5">张亚</td><td class="border-r border-[#d8d8d8] p-0 pl-0.5">销售部</td><td class="border-r border-[#d8d8d8]"></td><td></td></tr>
                <tr class="h-[22px] bg-[#f0f8ff]"><td class="border-r border-[#d8d8d8] bg-[#f3f3f3]"></td><td class="border-r border-[#d8d8d8] p-0"><input type="checkbox" aria-label="选择 lit" class="mx-auto block size-[13px] appearance-none border border-[#8a8a8a] bg-[#e8e8ea]"></td><td class="border-r border-[#d8d8d8] p-0 text-center font-['Liberation_Serif',serif]">3</td><td class="border-r border-[#d8d8d8] p-0 pl-[3px] font-['Liberation_Mono',monospace] text-[10px]">lit</td><td class="border-r border-[#d8d8d8] p-0 pl-0.5">李拓</td><td class="border-r border-[#d8d8d8] p-0 pl-0.5">研发部</td><td class="border-r border-[#d8d8d8]"></td><td></td></tr>
                <tr class="h-[21px] border-y border-dotted border-black bg-[#daedf7]"><td class="border-r border-[#d8d8d8] bg-[#f3f3f3] p-0"><svg class="mx-auto h-2 w-1.5" viewBox="0 0 6 8"><path d="M.5.5h5M.5 7.500h5M3 .5v7" stroke="#333"/></svg></td><td class="relative border-r border-[#d8d8d8] bg-[#f7f4fe] p-0"><label class="mx-auto grid size-[13px]"><input type="checkbox" checked aria-label="选择 zs" class="col-start-1 row-start-1 size-[13px] appearance-none border border-[#8a8a8a] bg-[#e6e9f2]"><svg class="col-start-1 row-start-1 size-[13px]"><use href="#check"/></svg></label><span class="absolute -top-[3px] right-0.5 -bottom-[3px] -left-[3px] border-3 border-[#fb3434]"></span></td><td class="border-r border-[#d8d8d8] p-0 text-center font-['Liberation_Serif',serif]">4</td><td class="border-r border-[#d8d8d8] p-0 pl-[3px] font-['Liberation_Mono',monospace] text-[10px]">zs</td><td class="border-r border-[#d8d8d8] p-0 pl-0.5">张三</td><td class="border-r border-[#d8d8d8] p-0 pl-0.5">办公室</td><td class="border-r border-[#d8d8d8]"></td><td></td></tr>
              </tbody>
            </table>
            <div class="mt-auto flex h-4 items-center bg-[#efefef] px-1.5"><svg class="h-1.5 w-1" viewBox="0 0 4 6"><path d="M4 0v6L0 3z" fill="#444"/></svg><span class="ml-[7px] flex h-[15px] w-[178px] items-center justify-center gap-px rounded-xs border border-[#979797] bg-linear-to-b from-[#f2f2f2] from-50% to-[#cfcfd1] to-60%"><i class="h-2 w-0.5 bg-[#777]"></i><i class="h-2 w-0.5 bg-[#777]"></i><i class="h-2 w-0.5 bg-[#777]"></i></span><svg class="ml-auto h-1.5 w-1" viewBox="0 0 4 6"><path d="M0 0v6l4-3z" fill="#444"/></svg></div>
          </div>
          <div class="flex h-[27px] items-center justify-between pr-[11px] pl-[9px]"><span>共有4条员工记录</span><label class="flex items-center gap-1"><input type="checkbox" class="size-[13px] appearance-none border border-[#8a8a8a] bg-[#e8e8ea]">显示无效员工</label></div>
        </div>
      </div>
    </div>
  </div>
</div>
</body>
</html>
